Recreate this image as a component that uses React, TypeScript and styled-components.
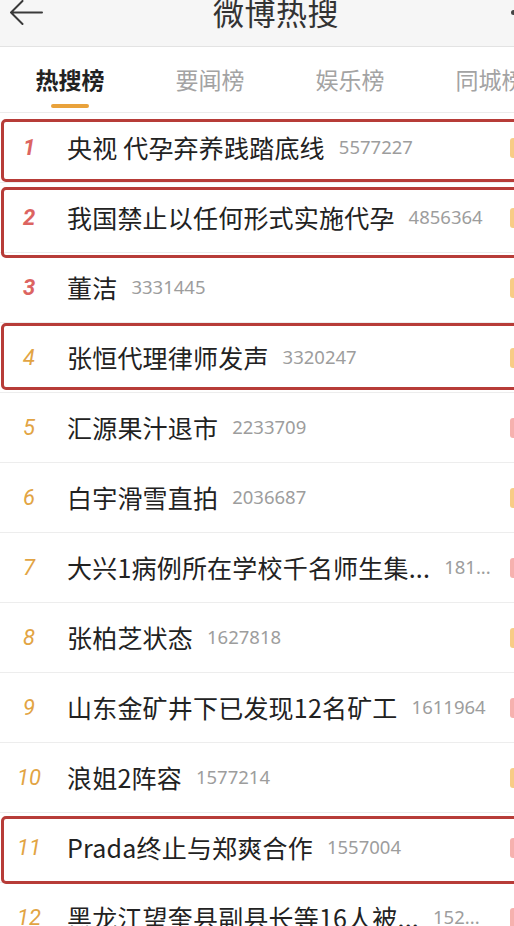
import styled, { createGlobalStyle } from "styled-components";

const GlobalStyle = createGlobalStyle`
  html, body {
    margin: 0;
    padding: 0;
    background: #ffffff;
  }
  body {
    font-family: "Noto Sans CJK SC", "Noto Sans", sans-serif;
    overflow: hidden;
  }
`;

const Wrapper = styled.div`
  width: 514px;
  height: 926px;
  overflow: hidden;
  background: #ffffff;
`;

const Header = styled.div`
  height: 46px;
  position: relative;
  display: flex;
  justify-content: center;
  align-items: flex-start;
  padding-left: 38px;
  background: #f6f6f6;
  border-bottom: 1px solid #e3e3e3;
`;

const BackButton = styled.div`
  position: absolute;
  left: 9px;
  top: 0;
  width: 36px;
  height: 26px;
  color: #3a3a3a;
`;

const HeaderTitle = styled.h1`
  margin: -5px 0 0;
  font-size: 31px;
  line-height: 34px;
  font-weight: 400;
  color: #333333;
  letter-spacing: 0.5px;
`;

const MoreDot = styled.span`
  position: absolute;
  right: -2px;
  top: 10px;
  width: 5px;
  height: 5px;
  border-radius: 50%;
  background: #444444;
`;

const TabBar = styled.div`
  height: 66px;
  box-sizing: border-box;
  display: flex;
  border-bottom: 1px solid #ececec;
  white-space: nowrap;
`;

const Tab = styled.div<{ $active?: boolean }>`
  flex: 0 0 140px;
  display: flex;
  flex-direction: column;
  align-items: center;
  padding-top: 17px;
  font-size: 23px;
  line-height: 30px;
  font-weight: ${(p) => (p.$active ? 700 : 400)};
  color: ${(p) => (p.$active ? "#222222" : "#a3a3a3")};
`;

const Underline = styled.span<{ $active?: boolean }>`
  margin-top: 10px;
  width: 38px;
  height: 4px;
  border-radius: 3px;
  background: ${(p) => (p.$active ? "#e9a23b" : "transparent")};
`;

const List = styled.div`
  display: flex;
  flex-direction: column;
`;

const Row = styled.div`
  position: relative;
  height: 70px;
  flex: 0 0 70px;
  box-sizing: border-box;
  display: flex;
  align-items: center;
  border-bottom: 1px solid #ededed;
`;

const Rank = styled.span<{ $top?: boolean }>`
  flex: 0 0 56px;
  text-align: center;
  font-family: Roboto, "Noto Sans", sans-serif;
  font-style: italic;
  font-size: 22px;
  line-height: 1;
  font-weight: ${(p) => (p.$top ? 700 : 400)};
  color: ${(p) => (p.$top ? "#dc6461" : "#e2a443")};
  padding-left: 1px;
`;

const Content = styled.div`
  flex: 1;
  display: flex;
  align-items: center;
  margin-left: 10px;
  white-space: nowrap;
  min-width: 0;
`;

const Title = styled.span`
  font-size: 25px;
  line-height: 1;
  color: #222222;
  letter-spacing: 0.2px;
`;

const Count = styled.span`
  margin-left: 14px;
  font-family: "Noto Sans", Roboto, sans-serif;
  font-size: 18.5px;
  line-height: 1;
  color: #9d9d9d;
`;

const Tag = styled.span<{ $pink?: boolean }>`
  flex: 0 0 20px;
  height: 20px;
  margin-right: -16px;
  border-radius: 3px;
  background: ${(p) => (p.$pink ? "#f6b1ae" : "#f8cc86")};
`;

const Highlight = styled.div<{ $top: number; $bottom: number }>`
  position: absolute;
  left: 1px;
  right: -12px;
  top: ${(p) => p.$top}px;
  bottom: ${(p) => p.$bottom}px;
  border: 3px solid #b73c38;
  border-radius: 5px;
  pointer-events: none;
`;

function BackArrow() {
  return (
    <svg width="36" height="26" viewBox="0 0 36 26" fill="none">
      <path
        d="M2 12.5H33M13.5 1L2 12.5L13.5 24"
        stroke="currentColor"
        strokeWidth="2"
        strokeLinecap="round"
        strokeLinejoin="round"
      />
    </svg>
  );
}

interface HotItem {
  title: string;
  count: string;
  pink?: boolean;
  box?: [number, number];
}

const tabs = ["热搜榜", "要闻榜", "娱乐榜", "同城榜"];

const items: HotItem[] = [
  { title: "央视 代孕弃养践踏底线", count: "5577227", box: [6, 0] },
  { title: "我国禁止以任何形式实施代孕", count: "4856364", box: [4, -6] },
  { title: "董洁", count: "3331445" },
  { title: "张恒代理律师发声", count: "3320247", box: [0, 2] },
  { title: "汇源果汁退市", count: "2233709", pink: true },
  { title: "白宇滑雪直拍", count: "2036687" },
  { title: "大兴1病例所在学校千名师生集...", count: "181...", pink: true },
  { title: "张柏芝状态", count: "1627818" },
  { title: "山东金矿井下已发现12名矿工", count: "1611964", pink: true },
  { title: "浪姐2阵容", count: "1577214" },
  { title: "Prada终止与郑爽合作", count: "1557004", pink: true, box: [3, -2] },
  { title: "黑龙江望奎县副县长等16人被...", count: "152...", pink: true },
];

function App() {
  return (
    <>
      <GlobalStyle />
      <Wrapper>
        <Header>
          <BackButton>
            <BackArrow />
          </BackButton>
          <HeaderTitle>微博热搜</HeaderTitle>
          <MoreDot />
        </Header>
        <TabBar>
          {tabs.map((tab, i) => (
            <Tab key={tab} $active={i === 0}>
              {tab}
              <Underline $active={i === 0} />
            </Tab>
          ))}
        </TabBar>
        <List>
          {items.map((item, i) => (
            <Row key={item.title}>
              <Rank $top={i < 3}>{i + 1}</Rank>
              <Content>
                <Title>{item.title}</Title>
                <Count>{item.count}</Count>
              </Content>
              <Tag $pink={item.pink} />
              {item.box && <Highlight $top={item.box[0]} $bottom={item.box[1]} />}
            </Row>
          ))}
        </List>
      </Wrapper>
    </>
  );
}

export default App;
